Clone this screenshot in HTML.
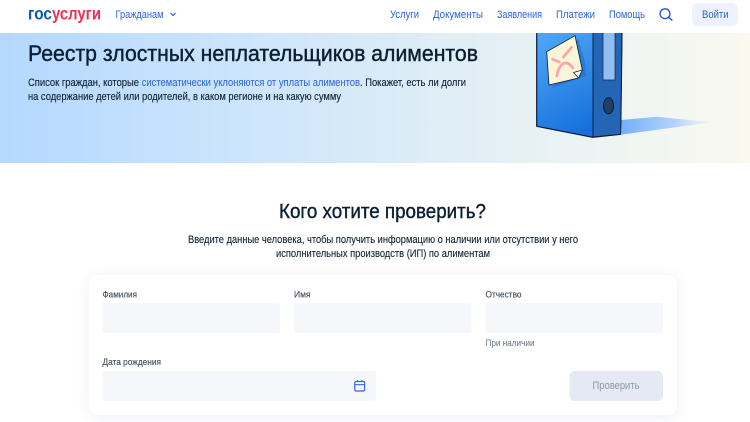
<!DOCTYPE html>
<html lang="ru"><head><meta charset="utf-8"><title>Реестр злостных неплательщиков алиментов</title>
<style>
html,body{margin:0;padding:0;width:750px;height:422px;overflow:hidden;background:#fff}
#w{position:relative;width:750px;height:422px;overflow:hidden;font-family:"Liberation Sans",sans-serif}
#hero{position:absolute;left:0;top:33px;width:750px;height:130px;background:linear-gradient(90deg,#b4d8ff 0%,#cbe4fc 30%,#dcecf7 55%,#ecf3f3 78%,#f9f9ef 100%)}
#card{position:absolute;left:89px;top:275px;width:588px;height:140px;background:#fff;border-radius:9px;box-shadow:0 2px 14px rgba(40,80,180,.09)}
svg{position:absolute;left:0;top:0}
text{font-family:"Liberation Sans",sans-serif}
</style></head><body><div id="w">
<div id="hero"></div><div id="card"></div>
<svg width="750" height="422" viewBox="0 0 750 422">
<defs>
<linearGradient id="fb" x1="0" y1="0" x2="0.45" y2="1"><stop offset="0" stop-color="#52a9f7"/><stop offset="1" stop-color="#1670dc"/></linearGradient>
<linearGradient id="sh" x1="0" y1="0" x2="1" y2="0"><stop offset="0" stop-color="#74aefb"/><stop offset=".6" stop-color="#b5d4f8"/><stop offset="1" stop-color="#e2eff6" stop-opacity=".4"/></linearGradient>
</defs>
<!-- binder -->
<path d="M621.500 120L656.700 116.700L712 122.300L622 134.500Z" fill="url(#sh)"/>
<path d="M536.700 30V126.300L592.700 137.300L620.700 134.300L622 30Z" fill="url(#fb)" stroke="#0b1a33" stroke-width="1.200" stroke-linejoin="round"/>
<path d="M593 30V137L620.700 134.300L622 30Z" fill="#2565b6" stroke="#0b1a33" stroke-width=".9"/>
<path d="M603 30V80H615V30Z" fill="#92bdf1"/><path d="M603 30V80H615V30" fill="none" stroke="#10233f" stroke-width=".7"/>
<ellipse cx="608.500" cy="105.800" rx="5" ry="8" fill="#1f4168" stroke="#0b1a33" stroke-width="1"/>
<path d="M552 88L586 76L585 62L578 38Z" fill="#145db8" opacity=".4"/>
<path d="M546.700 51.700L575 35.700L582.300 70L578.500 78L549 85Z" fill="#fbf6d8" stroke="#0b1a33" stroke-width=".8" stroke-linejoin="round"/>
<path d="M578.500 78L573.500 72.500L582.300 70Z" fill="#fff" stroke="#0b1a33" stroke-width=".7" stroke-linejoin="round"/>
<path d="M557 76C558.500 64 566.500 58 572.700 68M552.700 59.300L559.300 62M563.500 57L571.500 47.300" fill="none" stroke="#fca7ad" stroke-width="2.800" stroke-linecap="round"/>
<!-- hero text -->
<g fill="#0b1f33">
<text x="28" y="61" font-size="22" stroke="#0b1f33" stroke-width=".4" textLength="450" lengthAdjust="spacingAndGlyphs">Реестр злостных неплательщиков алиментов</text>
<g stroke="#0b1f33" stroke-width=".12">
<text x="28" y="86" font-size="11.200" textLength="111" lengthAdjust="spacingAndGlyphs">Список граждан, которые</text>
<text x="360" y="86" font-size="11.200" textLength="106" lengthAdjust="spacingAndGlyphs">. Покажет, есть ли долги</text>
<text x="28" y="100" font-size="11.200" textLength="313" lengthAdjust="spacingAndGlyphs">на содержание детей или родителей, в каком регионе и на какую сумму</text>
</g>
<text x="141.700" y="86" font-size="11.200" fill="#2a62d8" textLength="218.300" lengthAdjust="spacingAndGlyphs">систематически уклоняются от уплаты алиментов</text>
</g>
<!-- header -->
<rect width="750" height="33" fill="#fff"/>
<text x="28" y="19.500" font-size="17.500" font-weight="bold" fill="#0b5aa5" textLength="24" lengthAdjust="spacingAndGlyphs">гос</text>
<text x="52" y="19.500" font-size="17.500" font-weight="bold" fill="#ee2f53" textLength="49" lengthAdjust="spacingAndGlyphs">услуги</text>
<g fill="#2a62d8" font-size="11">
<text x="115.500" y="18" textLength="48" lengthAdjust="spacingAndGlyphs">Гражданам</text>
<text x="390" y="18" textLength="29" lengthAdjust="spacingAndGlyphs">Услуги</text>
<text x="433" y="18" textLength="50" lengthAdjust="spacingAndGlyphs">Документы</text>
<text x="497" y="18" textLength="45" lengthAdjust="spacingAndGlyphs">Заявления</text>
<text x="556" y="18" textLength="39" lengthAdjust="spacingAndGlyphs">Платежи</text>
<text x="609" y="18" textLength="36" lengthAdjust="spacingAndGlyphs">Помощь</text>
</g>
<path d="M170.500 13L173 15.500L175.500 13" fill="none" stroke="#2a62d8" stroke-width="1.200"/>
<circle cx="665" cy="13.700" r="4.900" fill="none" stroke="#1f57d0" stroke-width="1.300"/>
<path d="M668.500 17.200L672.300 20.500" stroke="#1f57d0" stroke-width="1.400"/>
<rect x="692" y="3" width="46" height="23" rx="6" fill="#edf2fe"/>
<text x="702" y="18" font-size="11" fill="#2a62d8" textLength="26.500" lengthAdjust="spacingAndGlyphs">Войти</text>
<!-- section heading -->
<text x="279" y="218" font-size="20.500" fill="#0b1f33" stroke="#0b1f33" stroke-width=".4" textLength="207" lengthAdjust="spacingAndGlyphs">Кого хотите проверить?</text>
<g fill="#0b1f33" font-size="11" stroke="#0b1f33" stroke-width=".1">
<text x="188" y="243" textLength="390" lengthAdjust="spacingAndGlyphs">Введите данные человека, чтобы получить информацию о наличии или отсутствии у него</text>
<text x="276" y="257" textLength="214" lengthAdjust="spacingAndGlyphs">исполнительных производств (ИП) по алиментам</text>
</g>
<!-- form -->
<g fill="#f5f7fa">
<rect x="102.500" y="303" width="177.500" height="30" rx="2"/>
<rect x="294" y="303" width="177.500" height="30" rx="2"/>
<rect x="485.500" y="303" width="177.500" height="30" rx="2"/>
<rect x="102.500" y="371" width="273.500" height="30" rx="2"/>
</g>
<g fill="#3a4a5c" font-size="9.500" stroke="#3a4a5c" stroke-width=".12">
<text x="102.500" y="297.500" textLength="34.500" lengthAdjust="spacingAndGlyphs">Фамилия</text>
<text x="294" y="297.500" textLength="16.500" lengthAdjust="spacingAndGlyphs">Имя</text>
<text x="485.500" y="297.500" textLength="36" lengthAdjust="spacingAndGlyphs">Отчество</text>
<text x="102.500" y="365" textLength="58.500" lengthAdjust="spacingAndGlyphs">Дата рождения</text>
</g>
<text x="485.500" y="346" font-size="9.500" fill="#66727f" textLength="49" lengthAdjust="spacingAndGlyphs">При наличии</text>
<rect x="569.500" y="371" width="93.500" height="30" rx="5" fill="#e4e9f3"/>
<text x="592.500" y="389" font-size="11" fill="#8d99a8" textLength="47" lengthAdjust="spacingAndGlyphs">Проверить</text>
<rect x="354.800" y="381.500" width="9.800" height="9.500" rx="1.300" fill="none" stroke="#3568dc" stroke-width="1.200"/>
<path d="M355 384.700H364.500M357.500 380V382M361.900 380V382" stroke="#3568dc" stroke-width="1.100" fill="none"/>
</svg>
</div></body></html>
